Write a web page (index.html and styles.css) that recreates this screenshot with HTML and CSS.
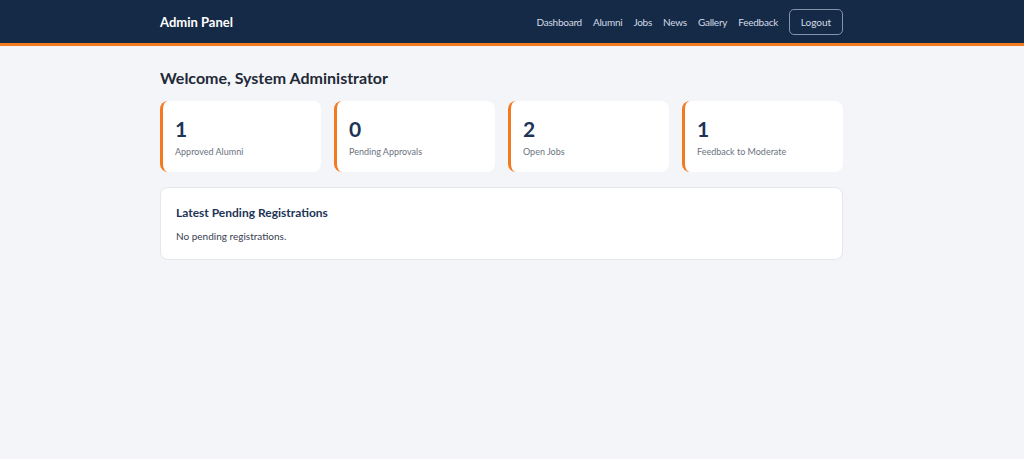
FILE: index.html
```html
<!DOCTYPE html>
<html lang="en">
<head>
<meta charset="utf-8">
<title>Admin Panel</title>
<link rel="stylesheet" href="styles.css">
</head>
<body>
<header class="topbar">
  <div class="topbar-inner">
    <div class="brand">Admin Panel</div>
    <nav class="nav">
      <a href="#">Dashboard</a>
      <a href="#">Alumni</a>
      <a href="#">Jobs</a>
      <a href="#">News</a>
      <a href="#">Gallery</a>
      <a href="#">Feedback</a>
      <a href="#" class="logout">Logout</a>
    </nav>
  </div>
</header>
<main class="container">
  <h1 class="welcome">Welcome, System Administrator</h1>
  <section class="stats">
    <div class="stat"><div class="stat-num">1</div><div class="stat-label">Approved Alumni</div></div>
    <div class="stat"><div class="stat-num">0</div><div class="stat-label">Pending Approvals</div></div>
    <div class="stat"><div class="stat-num">2</div><div class="stat-label">Open Jobs</div></div>
    <div class="stat"><div class="stat-num">1</div><div class="stat-label">Feedback to Moderate</div></div>
  </section>
  <section class="panel">
    <h2 class="panel-title">Latest Pending Registrations</h2>
    <p class="panel-text">No pending registrations.</p>
  </section>
</main>
</body>
</html>
```
FILE: styles.css
```css
* { box-sizing: border-box; }
body {
  margin: 0;
  background: #f4f5f9;
  font-family: Lato, "Open Sans", sans-serif;
  color: #1f2937;
}
.topbar {
  background: #152a47;
  border-bottom: 3px solid #f47a20;
  height: 46px;
}
.topbar-inner {
  width: 683px;
  margin-left: 160px;
  height: 43px;
  display: flex;
  align-items: center;
  justify-content: space-between;
}
.brand {
  color: #ffffff;
  font-weight: 700;
  font-size: 13px;
}
.nav {
  display: flex;
  align-items: center;
  gap: 11px;
}
.nav a {
  color: #d3dbe6;
  text-decoration: none;
  font-size: 10px;
  letter-spacing: -0.25px;
}
.nav a.logout {
  letter-spacing: 0;
  border: 1px solid #8393a8;
  border-radius: 5px;
  height: 26px;
  width: 54px;
  display: flex;
  align-items: center;
  justify-content: center;
}
.container {
  width: 683px;
  margin-left: 160px;
  padding-top: 22px;
}
.welcome {
  margin: 0 0 13px;
  font-size: 16px;
  font-weight: 700;
  color: #1f2937;
  line-height: 20px;
}
.stats {
  display: grid;
  grid-template-columns: repeat(4, 1fr);
  gap: 13px;
}
.stat {
  background: #fff;
  border-left: 3px solid #f47a20;
  border-radius: 8px;
  height: 71px;
  padding: 16px 12px 0;
}
.stat-num {
  font-size: 21px;
  font-weight: 700;
  color: #1c3456;
  line-height: 24px;
}
.stat-label {
  margin-top: 5px;
  font-size: 9px;
  color: #6b7280;
}
.panel {
  margin-top: 15px;
  background: #fff;
  border: 1px solid #e5e7eb;
  border-radius: 8px;
  height: 73px;
  padding: 16px 15px 0;
}
.panel-title {
  margin: 0;
  font-size: 12px;
  font-weight: 700;
  color: #1c3456;
  line-height: 18px;
}
.panel-text {
  margin: 8px 0 0;
  font-size: 10px;
  color: #374151;
}
```
